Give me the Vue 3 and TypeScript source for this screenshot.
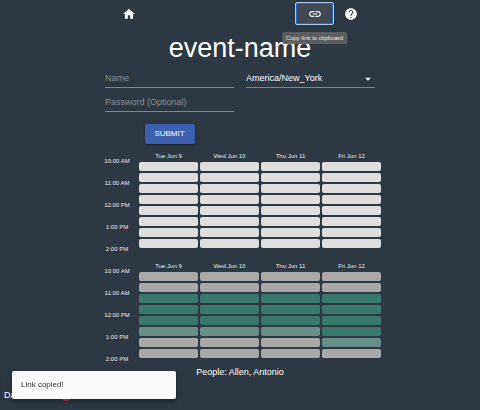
<script setup lang="ts">
import { ref } from 'vue'

type Level = 'none' | 'some' | 'all'

interface Slot {
  label: string
  levels: Level[]
}

const days: string[] = ['Tue Jun 9', 'Wed Jun 10', 'Thu Jun 11', 'Fri Jun 12']
const hours: string[] = ['10:00 AM', '11:00 AM', '12:00 PM', '1:00 PM']
const lastHour = '2:00 PM'

const counts: number[][] = [
  [0, 0, 0, 0],
  [0, 0, 0, 0],
  [2, 2, 2, 2],
  [2, 2, 2, 2],
  [2, 2, 2, 2],
  [1, 1, 1, 2],
  [0, 0, 0, 1],
  [0, 0, 0, 0],
]
const levelNames: Level[] = ['none', 'some', 'all']

const slots: Slot[] = counts.map((row, i) => ({
  label: i % 2 === 0 ? hours[i / 2] : '',
  levels: row.map((n) => levelNames[n]),
}))

const grids = [
  { id: 'mine', title: 'Your availability' },
  { id: 'group', title: 'Group availability' },
]

const people: string[] = ['Allen', 'Antonio']
const name = ref('')
const password = ref('')
const zone = ref('America/New_York')
const dark = ref(true)
</script>

<template>
  <div class="page">
    <header class="bar">
      <a class="icon-button" href="#" aria-label="Home">
        <svg class="icon home" viewBox="0 0 24 24"><path d="M10 20v-6h4v6h5v-8h3L12 3 2 12h3v8z" /></svg>
      </a>
      <div class="actions">
        <button class="icon-button focused" type="button" aria-label="Copy link to clipboard">
          <svg class="icon" viewBox="0 0 24 24">
            <path d="M3.9 12c0-1.71 1.39-3.1 3.1-3.1h4V7H7c-2.76 0-5 2.24-5 5s2.24 5 5 5h4v-1.9H7c-1.71 0-3.1-1.39-3.1-3.1zM8 13h8v-2H8v2zm9-6h-4v1.9h4c1.71 0 3.1 1.39 3.1 3.1s-1.39 3.1-3.1 3.1h-4V17h4c2.76 0 5-2.24 5-5s-2.24-5-5-5z" />
          </svg>
          <span class="tooltip">Copy link to clipboard</span>
        </button>
        <button class="icon-button" type="button" aria-label="Help">
          <svg class="icon" viewBox="0 0 24 24">
            <path d="M12 2C6.48 2 2 6.48 2 12s4.48 10 10 10 10-4.48 10-10S17.52 2 12 2zm1 17h-2v-2h2v2zm2.07-7.75l-.9.92C13.45 12.9 13 13.5 13 15h-2v-.5c0-1.1.45-2.1 1.17-2.83l1.24-1.26c.37-.36.59-.86.59-1.41 0-1.1-.9-2-2-2s-2 .9-2 2H8c0-2.21 1.79-4 4-4s4 1.79 4 4c0 .88-.36 1.68-.93 2.25z" />
          </svg>
        </button>
      </div>
    </header>

    <h1>event-name</h1>

    <form class="form" @submit.prevent>
      <div class="column">
        <input v-model="name" class="field" type="text" placeholder="Name" aria-label="Name" />
        <input v-model="password" class="field" type="password" placeholder="Password (Optional)" aria-label="Password (Optional)" />
        <button class="submit" type="submit">SUBMIT</button>
      </div>
      <div class="column">
        <div class="zone">
          <select v-model="zone" class="field" aria-label="Time zone">
            <option>America/New_York</option>
          </select>
          <svg class="arrow" viewBox="0 0 24 24"><path d="M7 10l5 5 5-5z" /></svg>
        </div>
      </div>
    </form>

    <table v-for="grid in grids" :key="grid.id" class="grid" :class="grid.id" :aria-label="grid.title">
      <thead>
        <tr>
          <td class="time"></td>
          <th v-for="day in days" :key="day" scope="col">{{ day }}</th>
        </tr>
      </thead>
      <tbody>
        <tr v-for="(slot, i) in slots" :key="i">
          <th v-if="slot.label" class="time" scope="row" rowspan="2">
            <div class="mark">{{ slot.label }}</div>
          </th>
          <td v-for="(level, d) in slot.levels" :key="d" class="cell" :class="level"></td>
        </tr>
      </tbody>
      <tfoot>
        <tr>
          <th class="time" scope="row"><div class="mark">{{ lastHour }}</div></th>
        </tr>
      </tfoot>
    </table>

    <p class="people">People: {{ people.join(', ') }}</p>

    <footer>
      <label class="mode">
        <span>Dark Mode</span>
        <input v-model="dark" class="switch" type="checkbox" role="switch" />
      </label>
    </footer>

    <div class="toast" role="status">Link copied!</div>
  </div>
</template>

<style>
body {
  background: #2e3843;
}
</style>

<style scoped>
.page {
  color: #fff;
  font-family: "Liberation Sans", Arial, sans-serif;
  font-size: 9px;
  line-height: 12px;
}

button,
input,
select {
  box-sizing: border-box;
  margin: 0;
  border: 0;
  font: inherit;
  color: inherit;
}

.bar {
  display: flex;
  justify-content: space-between;
  box-sizing: border-box;
  max-width: 254px;
  margin: 0 auto;
  padding-top: 2px;
}

.actions {
  display: flex;
  gap: 1px;
}

.icon-button {
  position: relative;
  display: flex;
  align-items: center;
  justify-content: center;
  width: 32px;
  height: 23px;
  padding: 0;
  border-radius: 2px;
  background: none;
  color: #fff;
}

.icon {
  width: 14px;
  height: 14px;
  fill: currentColor;
}

.focused {
  width: 39px;
  background: #424955;
  border: 1px solid #a3c9f2;
  box-shadow: inset 0 0 0 1px #1c6cc4;
}

.tooltip {
  position: absolute;
  top: 29px;
  left: 50%;
  z-index: 1;
  padding: 0 4px;
  border-radius: 2px;
  background: rgba(97, 97, 97, 0.92);
  color: #e8e8e8;
  font-size: 6px;
  line-height: 12px;
  white-space: nowrap;
  transform: translateX(-50%);
}

h1 {
  margin: 7px 0 0;
  font-size: 27px;
  font-weight: 400;
  line-height: 32px;
  text-align: center;
}

.form {
  display: grid;
  grid-template-columns: 1fr 1fr;
  gap: 12px;
  max-width: 270px;
  margin: 0 auto;
}

.column {
  display: flex;
  flex-direction: column;
  align-items: stretch;
}

.field {
  width: 100%;
  height: 24px;
  padding: 5px 0 0;
  border-bottom: 1px solid #7d878e;
  border-radius: 0;
  outline: 0;
  appearance: none;
  background: none;
}

.field::placeholder {
  color: #878d94;
  opacity: 1;
}

.zone {
  position: relative;
}

.arrow {
  position: absolute;
  top: 8px;
  right: 0;
  width: 14px;
  height: 14px;
  fill: #fff;
  pointer-events: none;
}

.submit {
  align-self: center;
  height: 20px;
  margin-top: 12px;
  padding: 0 9px;
  min-width: 50px;
  border-radius: 2px;
  background: #3d60ae;
  box-shadow: 0 1px 3px rgba(0, 0, 0, 0.4);
  font-size: 8px;
}

.grid {
  width: 100%;
  max-width: 286px;
  margin: 0 auto 8px;
  border-spacing: 2px;
  table-layout: fixed;
  font-size: 6px;
  line-height: 8px;
  color: #e9ebec;
}

.form + .grid {
  margin-top: 6px;
}

.grid th,
.grid td {
  padding: 0;
  font-weight: 400;
}

.grid .time {
  width: 38px;
  padding-right: 2px;
  box-sizing: border-box;
  vertical-align: top;
}

.mark {
  height: 0;
  margin-top: -1px;
  line-height: 0;
}

.cell {
  height: 9px;
  border-radius: 2px;
  background: #dedede;
}

.group .cell {
  background: #a9a9a9;
}

.group .some {
  background: #668f88;
}

.group .all {
  background: #3b786c;
}

.people {
  margin: -4px 0 0;
  text-align: center;
}

footer {
  padding: 11px 4px 8px;
}

.mode {
  display: inline-flex;
  align-items: center;
  gap: 4px;
}

.switch {
  position: relative;
  width: 19px;
  height: 8px;
  border-radius: 4px;
  appearance: none;
  background: #8a2a4c;
}

.switch::before {
  content: "";
  position: absolute;
  top: -2px;
  left: 0;
  width: 12px;
  height: 12px;
  border-radius: 50%;
  background: #d52f55;
}

.switch:checked::before {
  left: 8px;
}

.toast {
  position: fixed;
  left: 12px;
  bottom: 11px;
  z-index: 2;
  box-sizing: border-box;
  min-width: 164px;
  padding: 8px 9px;
  border-radius: 2px;
  background: #fafafa;
  box-shadow: 0 2px 5px rgba(0, 0, 0, 0.4);
  color: #333;
  font-size: 8px;
  line-height: 12px;
}
</style>
